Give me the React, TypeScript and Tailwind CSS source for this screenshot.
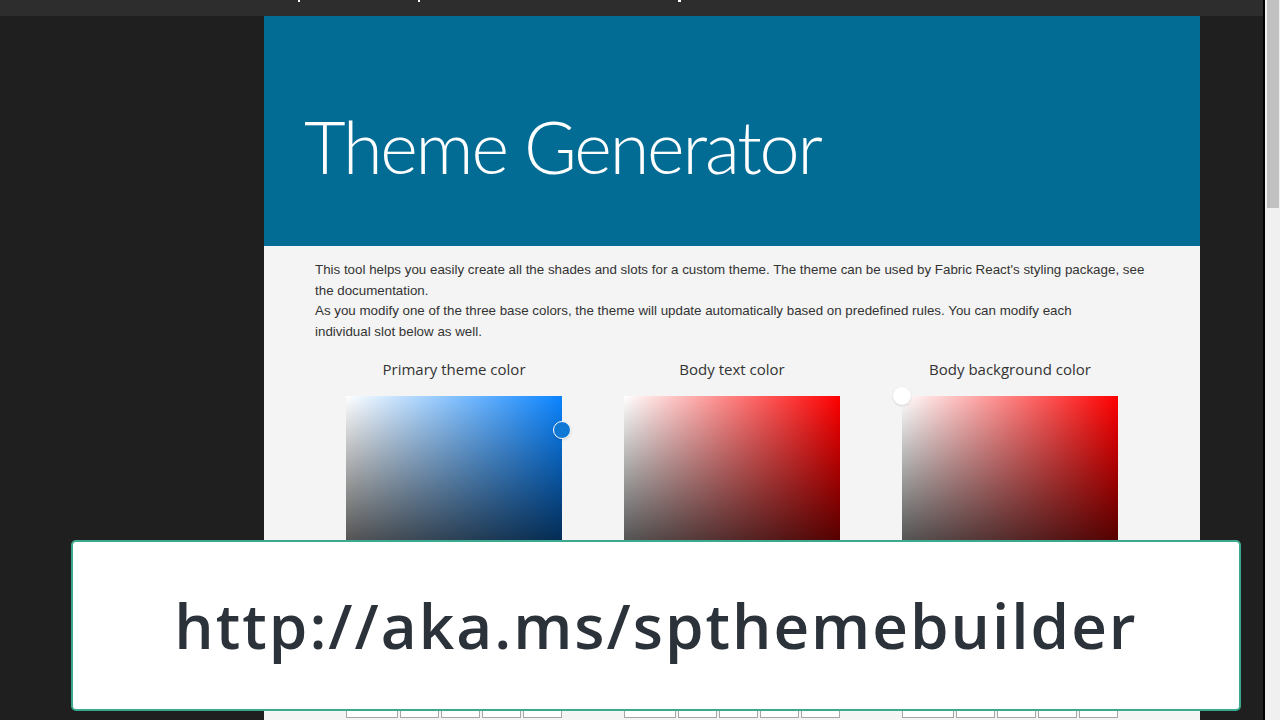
import React from 'react';

type Picker = { label: string; hue: string; thumb?: 'blue' | 'white' };

const pickers: Picker[] = [
  { label: 'Primary theme color', hue: '#0a84ff', thumb: 'blue' },
  { label: 'Body text color', hue: '#ff0000' },
  { label: 'Body background color', hue: '#ff0000', thumb: 'white' },
];

function ColorBox({ p }: { p: Picker }) {
  return (
    <div className="flex flex-col items-center">
      <div className="h-[26px] text-[15px] leading-[26px] text-[#333]">{p.label}</div>
      <div className="relative mt-[14px] h-[216px] w-[216px]" style={{ backgroundColor: p.hue }}>
        <div className="absolute inset-0 bg-gradient-to-r from-white to-transparent" />
        <div className="absolute inset-0 bg-gradient-to-b from-transparent to-black" />
        {p.thumb === 'blue' && (
          <div className="absolute right-[-9px] top-[25px] h-[18px] w-[18px] rounded-full border border-white bg-[#0f78d4] shadow" />
        )}
        {p.thumb === 'white' && (
          <div className="absolute left-[-9px] top-[-9px] h-[18px] w-[18px] rounded-full bg-white shadow" />
        )}
      </div>
      <div className="mt-[83px] flex w-[216px] gap-[2px]">
        <div className="h-[23px] w-[52px] border border-[#a6a6a6] bg-white" />
        <div className="h-[23px] flex-1 border border-[#a6a6a6] bg-white" />
        <div className="h-[23px] flex-1 border border-[#a6a6a6] bg-white" />
        <div className="h-[23px] flex-1 border border-[#a6a6a6] bg-white" />
        <div className="h-[23px] flex-1 border border-[#a6a6a6] bg-white" />
      </div>
    </div>
  );
}

export default function App() {
  return (
    <div className="relative flex h-[720px] w-[1280px] overflow-hidden bg-[#1f1f1f] font-['Open_Sans',sans-serif]">
      <div className="flex w-[1263px] flex-col">
        <div className="flex h-[16px] shrink-0 items-end gap-[118px] bg-[#2d2d2d] pl-[298px]">
          <span className="mb-[14px] h-[2px] w-[2px] bg-white" />
          <span className="mb-[14px] h-[2px] w-[2px] bg-white" />
          <span className="ml-[140px] mb-[14px] h-[2px] w-[3px] bg-white" />
        </div>
        <div className="flex flex-1">
          <div className="w-[264px] shrink-0 bg-[#1f1f1f]" />
          <main className="w-[936px] shrink-0 bg-[#f4f4f4]">
            <header className="flex h-[230px] items-center bg-[#036c94] pl-[40px]">
              <h1 className="mt-[30px] font-['Lato',sans-serif] text-[72px] font-light leading-none tracking-[-2.2px] text-white">
                Theme Generator
              </h1>
            </header>
            <section className="px-[51px] pt-[14px] font-['Liberation_Sans',sans-serif] text-[13.35px] leading-[20.5px] text-[#333]">
              <p className="whitespace-nowrap">
                This tool helps you easily create all the shades and slots for a custom theme. The theme can be used by Fabric React's styling package, see
                <br />
                the documentation.
              </p>
              <p className="whitespace-nowrap">
                As you modify one of the three base colors, the theme will update automatically based on predefined rules. You can modify each
                <br />
                individual slot below as well.
              </p>
              <div className="mt-[14px] grid grid-cols-3 font-['Open_Sans',sans-serif]">
                {pickers.map((p) => (
                  <ColorBox key={p.label} p={p} />
                ))}
              </div>
            </section>
          </main>
          <div className="flex-1 bg-[#1f1f1f]" />
        </div>
      </div>
      <div className="w-[2px] bg-black" />
      <div className="flex w-[15px] flex-col bg-[#f0f0f0] pl-[2px]">
        <div className="h-[208px] w-[12px] bg-[#c1c1c1]" />
      </div>

      <div className="absolute left-[71px] top-[540px] flex h-[171px] w-[1170px] items-center justify-center rounded-[5px] border-2 border-[#3aa98e] bg-white">
        <span className="font-['Open_Sans',sans-serif] text-[62px] font-semibold tracking-[2px] text-[#2c323a]">
          http://aka.ms/spthemebuilder
        </span>
      </div>
    </div>
  );
}
